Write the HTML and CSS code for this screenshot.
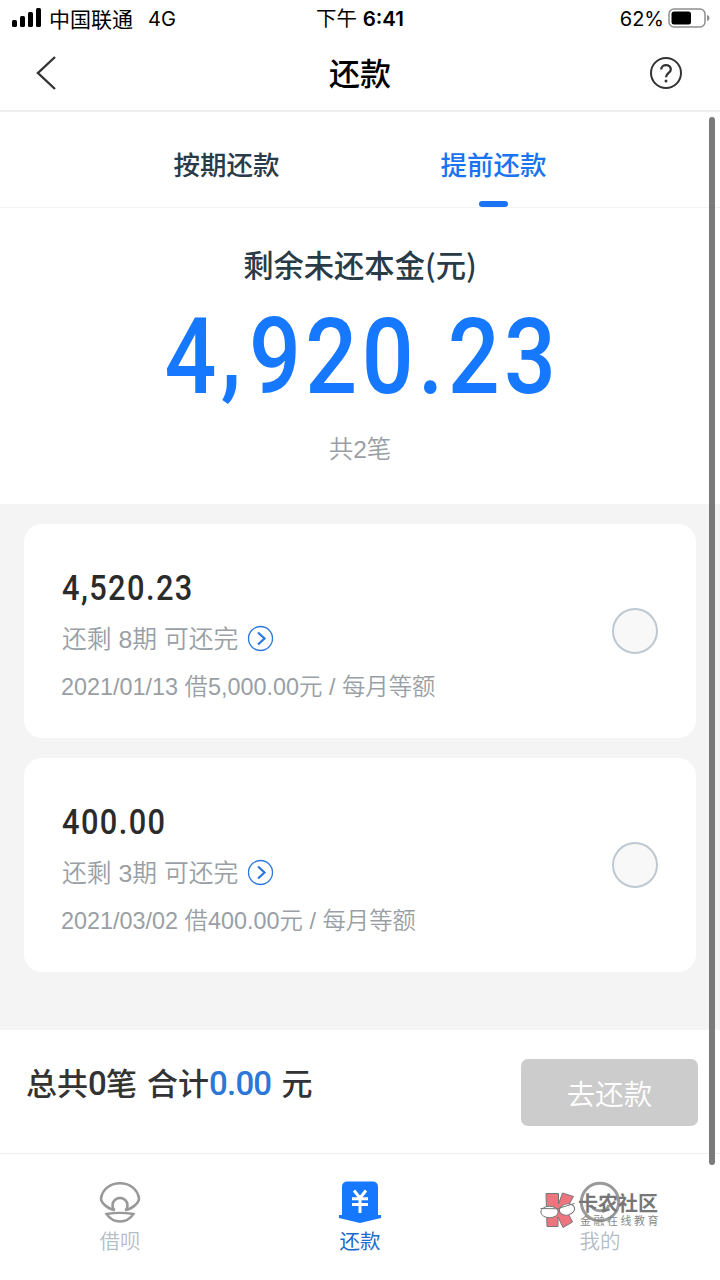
FILE: index.html
```html
<!DOCTYPE html>
<html lang="zh-CN">
<head>
    <meta charset="UTF-8">
    <meta name="viewport" content="width=device-width, initial-scale=1.0">
    <title>还款</title>
    <link rel="stylesheet" href="styles.css">
</head>
<body>
    <div class="status">
        <div class="status-left">
            <svg class="signal" width="30" height="19" viewBox="0 0 30 19">
                <rect x="0" y="12" width="5" height="7" rx="1.6"/>
                <rect x="8" y="8" width="5" height="11" rx="1.6"/>
                <rect x="16" y="4" width="5" height="15" rx="1.6"/>
                <rect x="24" y="0" width="5" height="19" rx="1.6"/>
            </svg>
            <span class="carrier">中国联通</span>
            <span class="network">4G</span>
        </div>
        <div class="time">下午 <b>6:41</b></div>
        <div class="status-right">
            <span>62%</span>
            <svg class="battery" width="43" height="20" viewBox="0 0 43 20">
                <rect x="1" y="1" width="36" height="18" rx="5" fill="none" stroke="#8f8f8f" stroke-width="1.5"/>
                <rect x="3.5" y="3.5" width="19.5" height="13" rx="2.5"/>
                <path d="M39 7 C42.3 7.6 42.3 12.4 39 13 Z" fill="#8f8f8f"/>
            </svg>
        </div>
    </div>

    <header class="nav">
        <svg class="back" width="22" height="34" viewBox="0 0 22 34" fill="none" stroke="#333" stroke-width="2.4">
            <path d="M20 1 L3 17 L20 33"/>
        </svg>
        <h1>还款</h1>
        <svg class="help" width="34" height="34" viewBox="0 0 34 34" fill="none" stroke="#333" stroke-width="2">
            <circle cx="17" cy="17" r="15"/>
            <path d="M12.2 13.6 C12.2 7.7 21.8 7.7 21.8 13.4 C21.8 17.1 17 16.6 17 21.2" stroke-width="2.3"/>
            <circle cx="17" cy="25" r="1.5" fill="#333" stroke="none"/>
        </svg>
    </header>

    <div class="tabs">
        <div class="tab">按期还款</div>
        <div class="tab active">提前还款</div>
    </div>

    <section class="summary">
        <h2>剩余未还本金(元)</h2>
        <div class="total">4<span class="comma">,</span>920.23</div>
        <p>共2笔</p>
    </section>

    <main class="list">
        <div class="card">
            <div class="info">
                <div class="amount">4,520.23</div>
                <div class="periods">
                    <span>还剩 8期 可还完</span>
                    <svg width="27" height="27" viewBox="0 0 27 27" fill="none" stroke="#2878e0">
                        <circle cx="13.5" cy="13.5" r="12" stroke-width="1.3"/>
                        <path d="M11 7.5 L17.5 13.5 L11 19.5" stroke-width="2.2"/>
                    </svg>
                </div>
                <div class="detail">2021/01/13 借5,000.00元 / 每月等额</div>
            </div>
            <div class="check"></div>
        </div>
        <div class="card">
            <div class="info">
                <div class="amount">400.00</div>
                <div class="periods">
                    <span>还剩 3期 可还完</span>
                    <svg width="27" height="27" viewBox="0 0 27 27" fill="none" stroke="#2878e0">
                        <circle cx="13.5" cy="13.5" r="12" stroke-width="1.3"/>
                        <path d="M11 7.5 L17.5 13.5 L11 19.5" stroke-width="2.2"/>
                    </svg>
                </div>
                <div class="detail">2021/03/02 借400.00元 / 每月等额</div>
            </div>
            <div class="check"></div>
        </div>
    </main>

    <div class="pay">
        <div class="pay-text">总共<span class="num">0</span>笔 合计<span class="num blue">0.00</span> 元</div>
        <button>去还款</button>
    </div>

    <footer class="bottom">
        <div class="item">
            <svg width="44" height="44" viewBox="0 0 44 44" fill="none" stroke="#999" stroke-width="2.6">
                <path d="M17 30 C9 29 3 22 3 18.5 C4.5 8 13.5 3.3 22 3.3 C30.5 3.3 39.5 8 41 18.5 C41 22 35 29 27 30"/>
                <path d="M16.5 30.5 A7.5 7.5 0 1 1 27.5 30.5"/>
                <path d="M8.5 34 C17 32.5 27 32.5 35.5 34 C32 39 27 41.5 22 41.5 C17 41.5 12 39 8.5 34 Z" stroke-width="2.3"/>
            </svg>
            <span>借呗</span>
        </div>
        <div class="item on">
            <svg width="44" height="44" viewBox="0 0 44 44">
                <path d="M4 7 Q4 1.5 9.5 1.5 H34.5 Q40 1.5 40 7 V35 H43 V38 L22 43 L1 38 V35 H4 Z" fill="#1677ff"/>
                <path d="M16 10.5 L22 18 L28 10.5 M14 18.7 H30 M14 24.5 H30 M22 18 V33" fill="none" stroke="#fff" stroke-width="3"/>
            </svg>
            <span>还款</span>
        </div>
        <div class="item">
            <svg width="44" height="44" viewBox="0 0 44 44" fill="none" stroke="#999" stroke-width="3">
                <circle cx="22" cy="22" r="18.7"/>
                <path d="M13 25 C16 32.5 28 32.5 31 25"/>
            </svg>
            <span>我的</span>
        </div>
    </footer>

    <div class="logo">
        <svg width="36" height="38" viewBox="0 0 36 38" stroke="#777" stroke-width="1">
            <path d="M6 2.500 H18.500 V13 L22.500 2 L33.500 5.500 L26 18.500 L32.500 31 L23 36.500 L18 26 V35.500 H7 Z" fill="#ee7580"/>
            <ellipse cx="9.500" cy="21" rx="8.700" ry="5.700" fill="#fff"/>
            <ellipse cx="27" cy="18.500" rx="7.700" ry="5.500" transform="rotate(-12 27 18.500)" fill="#fff"/>
            <path d="M.5 17.500 L18 17.800 L19.500 17 L34.500 12.500" fill="none"/>
        </svg>
        <div class="logo-text">
            <strong>卡农社区</strong>
            <small>金融在线教育</small>
        </div>
    </div>
    <div class="scrollbar"></div>
</body>
</html>
```
FILE: styles.css
```css
* {
    box-sizing: border-box;
}
body {
    margin: 0;
    width: 720px;
    height: 1280px;
    overflow: hidden;
    position: relative;
    display: flex;
    flex-direction: column;
    background: #fff;
    color: #333;
    font-family: "Liberation Sans", "Noto Sans CJK SC", sans-serif;
}
h1, h2, p {
    margin: 0;
}
svg {
    display: block;
    flex: none;
}
.status {
    height: 37px;
    display: grid;
    grid-template-columns: 1fr auto 1fr;
    align-items: center;
    padding: 0 9px 0 12px;
    color: #000;
    font: 20px/37px Inter, "Noto Sans CJK SC", sans-serif;
}
.status-left, .status-right {
    display: flex;
    align-items: center;
}
.status-right {
    justify-content: flex-end;
    gap: 4px;
}
.signal {
    margin: 0 7px 3px 0;
}
.battery {
    margin-bottom: 2px;
}
.carrier {
    font-size: 21px;
}
.network {
    margin-left: 15px;
    font-size: 20px;
}
.time {
    padding: 0 3px 1px 0;
    font-size: 20.5px;
}
.time b {
    font-weight: 600;
}
.nav {
    height: 75px;
    display: grid;
    grid-template-columns: 1fr auto 1fr;
    align-items: center;
    padding: 0 37px 2px 35px;
    border-bottom: 2px solid #eee;
}
.nav h1 {
    padding: 4px 0 0 2px;
    color: #000;
    font-size: 31px;
    font-weight: 500;
    line-height: 40px;
}
.help {
    justify-self: end;
}
.tabs {
    height: 96px;
    display: flex;
    justify-content: center;
    padding: 0 93px;
    border-bottom: 1px solid #f3f3f3;
}
.tab {
    flex: 1;
    display: flex;
    flex-direction: column;
    align-items: center;
    justify-content: space-between;
    padding-top: 33px;
    color: #293b47;
    font-size: 26.5px;
    font-weight: 500;
    line-height: 42px;
}
.active {
    color: #1a73f0;
}
.active::after {
    content: "";
    width: 29px;
    height: 6px;
    border-radius: 3px;
    background: #1a73f0;
}
.summary {
    height: 296px;
    display: flex;
    flex-direction: column;
    align-items: center;
    padding-top: 34px;
}
.summary h2 {
    color: #293b47;
    font-family: "Noto Sans CJK SC", sans-serif;
    font-size: 30.3px;
    font-weight: 500;
    line-height: 44px;
}
.total {
    margin: 10px 0 0 5px;
    color: #1677ff;
    font-family: Roboto, sans-serif;
    font-size: 105px;
    font-weight: 500;
    line-height: 124px;
    letter-spacing: 5px;
    white-space: nowrap;
    transform: scaleX(0.87);
}
.comma {
    margin: 0 4px 0 0;
    vertical-align: 6px;
    line-height: 0;
}
.summary p {
    margin-top: 10px;
    color: #999fa5;
    font-size: 24.5px;
    font-weight: 350;
    line-height: 40px;
}
.list {
    height: 526px;
    display: flex;
    flex-direction: column;
    gap: 20px;
    padding: 20px 24px;
    background: #f4f4f4;
}
.card {
    height: 214px;
    display: flex;
    align-items: center;
    justify-content: space-between;
    padding: 0 38px;
    border-radius: 18px;
    background: #fff;
}
.info {
    padding-top: 12px;
    color: #999fa5;
    font-weight: 350;
    white-space: nowrap;
}
.amount {
    padding-top: 1px;
    color: #2b2b2b;
    font-family: Roboto, sans-serif;
    font-size: 35px;
    font-weight: 500;
    line-height: 44px;
    letter-spacing: 1.6px;
    transform: scaleX(0.88);
    transform-origin: left;
}
.periods {
    display: flex;
    align-items: center;
    gap: 9px;
    margin-top: 7px;
    font-size: 24.8px;
    line-height: 44px;
}
.periods svg {
    margin-bottom: 2px;
}
.detail {
    margin: 3px 0 0 -1px;
    font-size: 23.4px;
    line-height: 44px;
}
.check {
    width: 46px;
    height: 46px;
    border: 2px solid #bdc8d1;
    border-radius: 50%;
    background: #f8f8f8;
}
.pay {
    height: 123px;
    display: flex;
    align-items: center;
    justify-content: space-between;
    padding: 2px 22px 0 26px;
}
.pay-text {
    margin-bottom: 17px;
    font-size: 31px;
    font-weight: 500;
    line-height: 44px;
    word-spacing: 1.5px;
}
.num {
    font-family: Roboto, sans-serif;
    font-size: 33px;
    letter-spacing: -0.8px;
}
.blue {
    color: #2a77d8;
}
.pay button {
    width: 177px;
    height: 67px;
    padding: 0;
    border: 0;
    border-radius: 7px;
    background: #ccc;
    color: #fff;
    font: 350 28.5px/67px "Noto Sans CJK SC", sans-serif;
}
.bottom {
    height: 127px;
    display: flex;
    border-top: 1px solid #eee;
}
.item {
    flex: 1;
    display: flex;
    flex-direction: column;
    align-items: center;
    gap: 2px;
    padding-top: 26px;
    color: #b5bdc6;
    font-size: 20.5px;
    font-weight: 350;
    line-height: 32px;
}
.on {
    color: #1b69cc;
    font-weight: 400;
}
.logo {
    position: absolute;
    left: 540px;
    top: 1191px;
    display: flex;
    gap: 2px;
    color: #777;
    white-space: nowrap;
}
.logo-text {
    display: flex;
    flex-direction: column;
    padding-top: 1px;
}
.logo strong {
    font-size: 20px;
    font-weight: 700;
    line-height: 24px;
}
.logo small {
    padding-left: 2px;
    color: #888;
    font-size: 11px;
    letter-spacing: 2.5px;
    line-height: 11px;
}
.scrollbar {
    position: absolute;
    top: 117px;
    right: 5px;
    width: 6px;
    height: 1048px;
    border-radius: 3px;
    background: #7a7a7a;
}
```
